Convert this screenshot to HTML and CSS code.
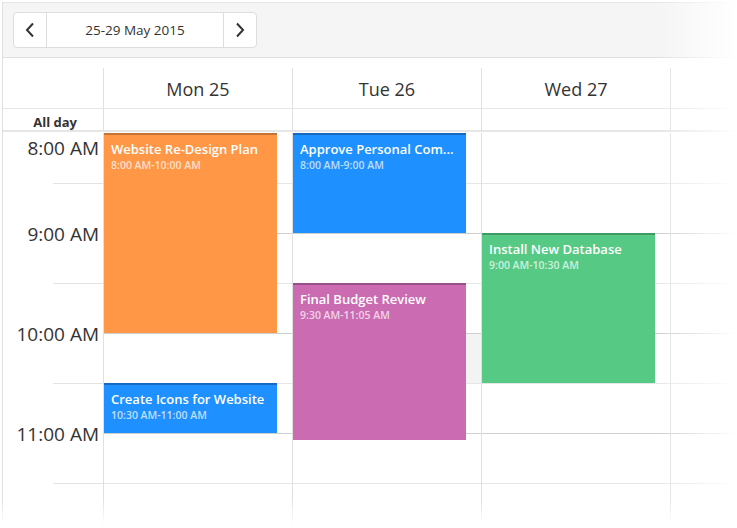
FILE: index.html
```html
<!DOCTYPE html>
<html>
<head>
<meta charset="utf-8">
<link rel="stylesheet" href="styles.css">
</head>
<body>
<div class="frame">
  <div class="scheduler">
    <div class="toolbar">
      <div class="nav">
        <button class="nav-btn" aria-label="Previous">
          <svg width="10" height="16" viewBox="0 0 10 16"><path d="M8 1.5 L2 8 L8 14.5" fill="none" stroke="#333" stroke-width="2"/></svg>
        </button>
        <div class="nav-date">25-29 May 2015</div>
        <button class="nav-btn" aria-label="Next">
          <svg width="10" height="16" viewBox="0 0 10 16"><path d="M2 1.5 L8 8 L2 14.5" fill="none" stroke="#333" stroke-width="2"/></svg>
        </button>
      </div>
    </div>

    <div class="head">
      <div class="head-time"></div>
      <div class="head-day">Mon 25</div>
      <div class="head-day">Tue 26</div>
      <div class="head-day">Wed 27</div>
      <div class="head-day"></div>
    </div>

    <div class="allday">
      <div class="allday-label">All day</div>
      <div class="allday-cell"></div>
      <div class="allday-cell"></div>
      <div class="allday-cell"></div>
      <div class="allday-cell"></div>
    </div>

    <div class="body">
      <div class="times">
        <div class="time t-first">8:00 AM</div>
        <div class="time">9:00 AM</div>
        <div class="time">10:00 AM</div>
        <div class="time">11:00 AM</div>
      </div>

      <div class="day">
        <div class="slot"></div><div class="slot"></div><div class="slot"></div><div class="slot"></div>
        <div class="slot"></div><div class="slot"></div><div class="slot"></div><div class="slot"></div>
        <div class="appt orange" style="top:0px;height:200px">
          <div class="appt-title">Website Re-Design Plan</div>
          <div class="appt-time">8:00 AM-10:00 AM</div>
        </div>
        <div class="appt blue" style="top:250px;height:50px">
          <div class="appt-title">Create Icons for Website</div>
          <div class="appt-time">10:30 AM-11:00 AM</div>
        </div>
      </div>

      <div class="day">
        <div class="slot"></div><div class="slot"></div><div class="slot"></div><div class="slot"></div>
        <div class="slot slot-hover"></div><div class="slot"></div><div class="slot"></div><div class="slot"></div>
        <div class="appt blue" style="top:0px;height:100px">
          <div class="appt-title">Approve Personal Com...</div>
          <div class="appt-time">8:00 AM-9:00 AM</div>
        </div>
        <div class="appt purple" style="top:150px;height:157px">
          <div class="appt-title">Final Budget Review</div>
          <div class="appt-time">9:30 AM-11:05 AM</div>
        </div>
      </div>

      <div class="day">
        <div class="slot"></div><div class="slot"></div><div class="slot"></div><div class="slot"></div>
        <div class="slot"></div><div class="slot"></div><div class="slot"></div><div class="slot"></div>
        <div class="appt green" style="top:100px;height:150px">
          <div class="appt-title">Install New Database</div>
          <div class="appt-time">9:00 AM-10:30 AM</div>
        </div>
      </div>

      <div class="day">
        <div class="slot"></div><div class="slot"></div><div class="slot"></div><div class="slot"></div>
        <div class="slot"></div><div class="slot"></div><div class="slot"></div><div class="slot"></div>
      </div>
    </div>
  </div>
  <div class="fade-right"></div>
  <div class="fade-bottom"></div>
</div>
</body>
</html>
```

FILE: styles.css
```css
* { box-sizing: border-box; }

html, body {
  margin: 0;
  padding: 0;
  background: #fff;
}

body {
  width: 737px;
  height: 528px;
  overflow: hidden;
  font-family: "Open Sans", "Noto Sans", sans-serif;
  color: #333;
}

.frame {
  position: relative;
  width: 737px;
  height: 528px;
  overflow: hidden;
  padding: 2px 0 0 2px;
}

.scheduler {
  width: 900px;
  border-left: 1px solid #e0e0e0;
  border-top: 1px solid #e6e6e6;
}

/* toolbar */
.toolbar {
  height: 55px;
  background: #f5f5f5;
  border-bottom: 1px solid #e0e0e0;
  padding: 9px 0 0 10px;
}

.nav {
  display: flex;
  width: 244px;
  height: 36px;
  background: #fff;
  border: 1px solid #ddd;
  border-radius: 4px;
}

.nav-btn {
  width: 32px;
  height: 100%;
  border: 0;
  background: transparent;
  padding: 0;
  display: flex;
  align-items: center;
  justify-content: center;
}

.nav-date {
  flex: 1;
  border-left: 1px solid #ddd;
  border-right: 1px solid #ddd;
  display: flex;
  align-items: center;
  justify-content: center;
  font-size: 13.5px;
  color: #333;
}

/* header */
.head {
  display: grid;
  grid-template-columns: 101px repeat(4, 189px);
  margin-top: 10px;
  height: 41px;
  border-bottom: 1px solid #e6e6e6;
}

.head-time {
  border-right: 1px solid #e0e0e0;
}

.head-day {
  border-right: 1px solid #e0e0e0;
  display: flex;
  align-items: center;
  justify-content: center;
  font-size: 18px;
  color: #333;
  padding-top: 1px;
}

/* all day row */
.allday {
  display: grid;
  grid-template-columns: 101px repeat(4, 189px);
  height: 23px;
  border-bottom: 2px solid #e6e6e6;
}

.allday-label {
  border-right: 1px solid #e0e0e0;
  font-size: 13px;
  font-weight: 700;
  text-align: right;
  padding-right: 26px;
  padding-top: 4px;
  color: #333;
}

.allday-cell {
  border-right: 1px solid #e0e0e0;
}

/* body */
.body {
  display: grid;
  grid-template-columns: 101px repeat(4, 189px);
  padding-top: 1px;
}

.times {
  border-right: 1px solid #e0e0e0;
  background-image: repeating-linear-gradient(to bottom,
      transparent 0 50px, #e3e3e3 50px 51px, transparent 51px 100px);
  background-size: 50px 100%;
  background-position: right top;
  background-repeat: no-repeat;
  padding-top: 2px;
}

.time {
  height: 100px;
  text-align: right;
  padding-right: 4px;
  font-size: 19px;
  line-height: 26px;
  color: #333;
}

.time.t-first {
  height: 86px;
}

.day {
  position: relative;
  border-right: 1px solid #e0e0e0;
  padding-top: 1px;
}

.slot {
  height: 50px;
  border-bottom: 1px solid #e6e6e6;
}

.slot:nth-child(2n) {
  border-bottom-color: #cfcfcf;
}

.slot-hover {
  background: #f3f3f3;
}

/* appointments */
.appt {
  position: absolute;
  left: 0;
  width: 173px;
  border-top: 2px solid;
  padding: 6px 7px 0 7px;
  color: #fff;
  overflow: hidden;
}

.appt-title {
  font-size: 13px;
  font-weight: 600;
  line-height: 16px;
  white-space: nowrap;
}

.appt-time {
  margin-top: 1px;
  font-size: 10.5px;
  font-weight: 600;
  line-height: 14px;
  color: rgba(255, 255, 255, 0.72);
  white-space: nowrap;
}

.orange { background: #ff9747; border-top-color: #c87235; }
.blue { background: #1e90ff; border-top-color: #1769c2; }
.purple { background: #cb6bb2; border-top-color: #98508a; }
.green { background: #56ca85; border-top-color: #3f9a64; }

/* fades */
.fade-right {
  position: absolute;
  top: 0;
  right: 0;
  width: 80px;
  height: 100%;
  background: linear-gradient(to right, rgba(255,255,255,0), #fff 100%);
  pointer-events: none;
}

.fade-bottom {
  position: absolute;
  left: 0;
  bottom: 0;
  width: 100%;
  height: 30px;
  background: linear-gradient(to bottom, rgba(255,255,255,0), #fff 90%);
  pointer-events: none;
}
```
